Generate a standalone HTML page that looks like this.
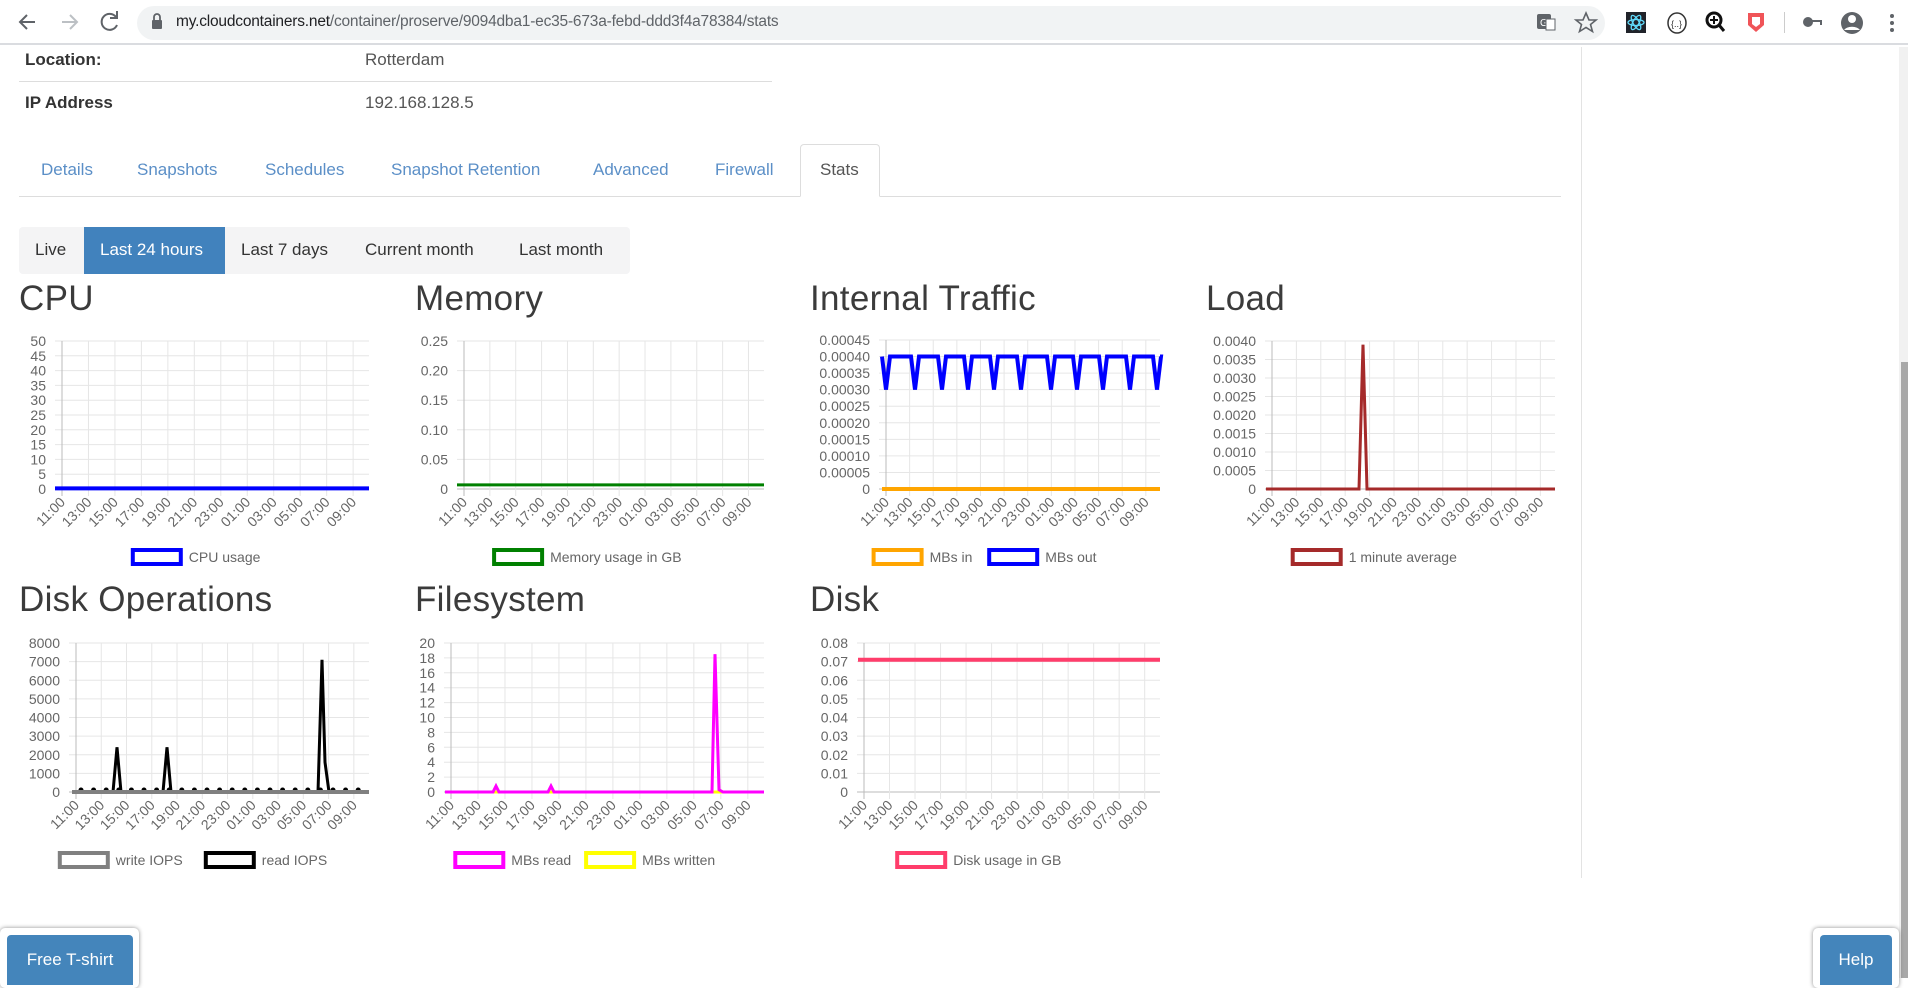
<!DOCTYPE html>
<html><head><meta charset="utf-8">
<style>
*{margin:0;padding:0;box-sizing:border-box}
body{width:1908px;height:978px;overflow:hidden;background:#fff;font-family:"Liberation Sans",sans-serif;position:relative;color:#333}
.abs{position:absolute}
#bar{left:0;top:0;width:1908px;height:45px;background:#fff;border-bottom:2px solid #dadce0}
#pill{left:137px;top:6px;width:1468px;height:34px;border-radius:17px;background:#f1f3f4}
#url{left:176px;top:13px;font-size:15.5px;color:#202124;letter-spacing:-0.2px;white-space:nowrap}
.lbl{font-size:17px;font-weight:bold;color:#333}
.val{font-size:17px;color:#555}
.tab{position:absolute;top:160px;font-size:17px;color:#5b8fc7}
#stats{left:800px;top:144px;width:80px;height:53px;border:1px solid #ddd;border-bottom:1px solid #fff;border-radius:4px 4px 0 0;background:#fff}
#bg{left:19px;top:227px;width:611px;height:47px;background:#f4f4f5;border-radius:4px}
.b{position:absolute;top:240px;font-size:17px;color:#333}
#act{left:84px;top:227px;width:141px;height:47px;background:#4182bd}
.title{position:absolute;font-size:35px;color:#3b3b3b;font-weight:normal;letter-spacing:0.3px}
.card{position:absolute;background:#fff;border-radius:5px;box-shadow:0 0 4px rgba(0,0,0,.45)}
.btn{position:absolute;background:#4485bb;color:#fff;font-size:17px;border-radius:4px 4px 0 0;text-align:center;padding-top:15px}
</style></head><body>
<div id="bar" class="abs"></div>
<div id="pill" class="abs"></div>
<svg class="abs" style="left:0;top:0" width="1908" height="45">
 <g fill="none" stroke="#5f6368" stroke-width="2">
  <path d="M35 22H20M27 15l-7 7 7 7"/>
  <path d="M62 22h15M70 15l7 7-7 7" stroke="#bcc0c4"/>
  <path d="M116 17a8 8 0 1 0 1 8"/><path d="M117 11v7h-7" fill="none"/>
 </g>
 <rect x="152" y="20" width="10" height="9" rx="1" fill="#5f6368"/><path d="M154 20v-3a3 3 0 0 1 6 0v3" stroke="#5f6368" stroke-width="1.8" fill="none"/>
 <rect x="1537" y="14" width="14" height="15" rx="2" fill="#5f6368"/><text x="1540" y="26" font-size="10" fill="#fff" font-family="Liberation Sans">G</text><rect x="1546" y="19" width="9" height="11" fill="#fff" stroke="#5f6368"/>
 <path d="M1586 13l3 7h7l-5.5 4.5 2 7-6.5-4-6.5 4 2-7-5.5-4.5h7z" fill="none" stroke="#5f6368" stroke-width="1.6"/>
 <rect x="1626" y="12" width="20" height="21" fill="#20232a"/><g stroke="#61dafb" stroke-width="1.3" fill="none"><ellipse cx="1636" cy="22.5" rx="8" ry="3"/><ellipse cx="1636" cy="22.5" rx="8" ry="3" transform="rotate(60 1636 22.5)"/><ellipse cx="1636" cy="22.5" rx="8" ry="3" transform="rotate(-60 1636 22.5)"/></g>
 <ellipse cx="1677" cy="23" rx="9" ry="10" fill="none" stroke="#333" stroke-width="1.5"/><text x="1671" y="27" font-size="9" fill="#333">{..}</text>
 <circle cx="1714" cy="20" r="7" fill="none" stroke="#111" stroke-width="3"/><path d="M1719 25l5 6" stroke="#111" stroke-width="3"/><path d="M1714 16v8M1710 20h8" stroke="#111" stroke-width="2"/>
 <path d="M1748 13h16v12l-8 7-8-7z" fill="#f05458"/><path d="M1752 17h8v7l-4 3-4-3z" fill="#fff"/>
 <rect x="1784" y="12" width="1" height="21" fill="#ccc"/>
 <circle cx="1808" cy="22" r="5" fill="#5f6368"/><path d="M1812 20h10v5h-2v-3h-8z" fill="#5f6368"/>
 <circle cx="1852" cy="23" r="11" fill="#5f6368"/><circle cx="1852" cy="19" r="4" fill="#fff"/><path d="M1844 30a9 6 0 0 1 16 0" fill="#fff"/>
 <g fill="#5f6368"><circle cx="1892" cy="16" r="2"/><circle cx="1892" cy="23" r="2"/><circle cx="1892" cy="30" r="2"/></g>
</svg>
<div id="url" class="abs">my.cloudcontainers.net<span style="color:#5f6368">/container/proserve/9094dba1-ec35-673a-febd-ddd3f4a78384/stats</span></div>

<div class="abs" style="left:1581px;top:47px;width:1px;height:831px;background:#e3e3e3"></div>
<div class="abs" style="left:1899px;top:47px;width:9px;height:931px;background:#f1f1f1"></div>
<div class="abs" style="left:1901px;top:362px;width:7px;height:616px;background:#a8a8a8"></div>

<div class="abs lbl" style="left:25px;top:50px">Location:</div>
<div class="abs val" style="left:365px;top:50px">Rotterdam</div>
<div class="abs" style="left:19px;top:81px;width:753px;height:1px;background:#ddd"></div>
<div class="abs lbl" style="left:25px;top:93px">IP Address</div>
<div class="abs val" style="left:365px;top:93px">192.168.128.5</div>

<div class="abs" style="left:19px;top:196px;width:1542px;height:1px;background:#ddd"></div>
<div id="stats" class="abs"></div>
<div class="tab" style="left:41px">Details</div>
<div class="tab" style="left:137px">Snapshots</div>
<div class="tab" style="left:265px">Schedules</div>
<div class="tab" style="left:391px">Snapshot Retention</div>
<div class="tab" style="left:593px">Advanced</div>
<div class="tab" style="left:715px">Firewall</div>
<div class="tab" style="left:820px;color:#555">Stats</div>

<div id="bg" class="abs"></div>
<div id="act" class="abs"></div>
<div class="b" style="left:35px">Live</div>
<div class="b" style="left:100px;color:#fff">Last 24 hours</div>
<div class="b" style="left:241px">Last 7 days</div>
<div class="b" style="left:365px">Current month</div>
<div class="b" style="left:519px">Last month</div>

<div class="title" style="left:19px;top:279px">CPU</div>
<div class="title" style="left:415px;top:279px">Memory</div>
<div class="title" style="left:810px;top:279px">Internal Traffic</div>
<div class="title" style="left:1206px;top:279px">Load</div>
<div class="title" style="left:19px;top:580px">Disk Operations</div>
<div class="title" style="left:415px;top:580px">Filesystem</div>
<div class="title" style="left:810px;top:580px">Disk</div>

<svg id="ch" class="abs" style="left:0;top:0" width="1908" height="978" font-family="Liberation Sans" font-size="14"></svg>

<div class="card" style="left:0;top:928px;width:139px;height:60px"></div>
<div class="btn" style="left:7px;top:935px;width:126px;height:50px">Free T-shirt</div>
<div class="card" style="left:1813px;top:928px;width:86px;height:60px"></div>
<div class="btn" style="left:1820px;top:935px;width:72px;height:50px">Help</div>

<script>
var svg=document.getElementById('ch'),h='';
var T=['11:00','13:00','15:00','17:00','19:00','21:00','23:00','01:00','03:00','05:00','07:00','09:00'];
function chart(c){
 var ax=c.ax,r=c.r,top=c.top,bot=c.bot,n=c.labels.length;
 for(var i=0;i<n;i++){var y=top+(bot-top)*i/(n-1);
  h+='<line x1="'+(ax-7)+'" y1="'+y+'" x2="'+r+'" y2="'+y+'" stroke="'+(i==n-1?'#bbb':'#e6e6e6')+'"/>';
  h+='<text x="'+(ax-16)+'" y="'+(y+5)+'" text-anchor="end" fill="#666">'+c.labels[i]+'</text>';}
 var st=(r-ax)/11.6;
 for(var j=0;j<12;j++){var x=ax+st*j;
  h+='<line x1="'+x+'" y1="'+top+'" x2="'+x+'" y2="'+(bot+7)+'" stroke="'+(j==0?'#bbb':'#e6e6e6')+'"/>';
  h+='<text x="'+(x+4)+'" y="'+(bot+14)+'" text-anchor="end" fill="#666" transform="rotate(-45 '+(x+4)+' '+(bot+14)+')">'+T[j]+'</text>';}
 c.series.forEach(function(s){
  var p=s.pts.map(function(q){return q[0]+','+(bot-(bot-top)*q[1]/c.max)}).join(' ');
  h+='<polyline points="'+p+'" fill="none" stroke="'+s.col+'" stroke-width="'+s.w+'" stroke-linejoin="miter"/>';
  if(s.dots)s.dots.forEach(function(x){h+='<circle cx="'+x+'" cy="'+(bot-2)+'" r="2.5" fill="#000"/>';});
 });
 var tw=c.legend.map(function(l){return 58+l[1].length*7.6});var tot=tw.reduce(function(a,b){return a+b},0)+12*(tw.length-1);
 var lx=(c.col+r)/2-tot/2,ly=bot+59;
 c.legend.forEach(function(l,k){h+='<rect x="'+(lx+2)+'" y="'+(ly+2)+'" width="48" height="14" fill="#fff" stroke="'+l[0]+'" stroke-width="4"/>';
  h+='<text x="'+(lx+58)+'" y="'+(ly+14)+'" fill="#666">'+l[1]+'</text>';lx+=tw[k]+12;});
}
function flat(a,b,v){return [[a,v],[b,v]]}
chart({col:19,ax:62,r:369,top:341,bot:489,max:50,labels:['50','45','40','35','30','25','20','15','10','5','0'],
 series:[{col:'#0000ff',w:4,pts:flat(55,369,0.2)}],legend:[['#0000ff','CPU usage']]});
chart({col:415,ax:464,r:764,top:341,bot:489,max:0.25,labels:['0.25','0.20','0.15','0.10','0.05','0'],
 series:[{col:'#008000',w:3,pts:flat(457,764,0.007)}],legend:[['#008000','Memory usage in GB']]});
var dips=[886,915,942,968,994,1021,1051,1077,1103,1130,1157],bp=[[882,0.0004]];
dips.forEach(function(d){bp.push([d-4,0.0004],[d,0.0003],[d+4,0.0004])});bp.push([1160,0.0004]);
chart({col:810,ax:886,r:1160,top:340,bot:489,max:0.00045,labels:['0.00045','0.00040','0.00035','0.00030','0.00025','0.00020','0.00015','0.00010','0.00005','0'],
 series:[{col:'#ffa500',w:4,pts:flat(882,1160,0)},{col:'#0000ff',w:4,pts:bp}],legend:[['#ffa500','MBs in'],['#0000ff','MBs out']]});
chart({col:1206,ax:1272,r:1555,top:341,bot:489,max:0.004,labels:['0.0040','0.0035','0.0030','0.0025','0.0020','0.0015','0.0010','0.0005','0'],
 series:[{col:'#a52a2a',w:3,pts:[[1266,0],[1359,0],[1363,0.0039],[1367,0],[1555,0]]}],legend:[['#a52a2a','1 minute average']]});
var dd=[];for(var x=81;x<369;x+=12.6)dd.push(x);
chart({col:19,ax:76,r:369,top:643,bot:792,max:8000,labels:['8000','7000','6000','5000','4000','3000','2000','1000','0'],
 series:[{col:'#000',w:3,dots:dd,pts:[[72,0],[113,0],[117,2400],[121,0],[163,0],[167,2400],[171,0],[318,0],[322,7100],[325,1600],[329,0],[369,0]]},{col:'#808080',w:4,pts:flat(72,369,0)}],
 legend:[['#808080','write IOPS'],['#000','read IOPS']]});
chart({col:415,ax:451,r:764,top:643,bot:792,max:20,labels:['20','18','16','14','12','10','8','6','4','2','0'],
 series:[{col:'#ffff00',w:3,pts:flat(445,764,0)},{col:'#ff00ff',w:3,pts:[[445,0],[493,0],[496,0.8],[499,0],[548,0],[551,0.8],[554,0],[712,0],[715,18.5],[719,0.3],[723,0],[764,0]]}],
 legend:[['#ff00ff','MBs read'],['#ffff00','MBs written']]});
chart({col:810,ax:864,r:1160,top:643,bot:792,max:0.08,labels:['0.08','0.07','0.06','0.05','0.04','0.03','0.02','0.01','0'],
 series:[{col:'#ff3d6b',w:4,pts:flat(858,1160,0.071)}],legend:[['#ff3d6b','Disk usage in GB']]});
svg.innerHTML=h;
</script>
</body></html>
